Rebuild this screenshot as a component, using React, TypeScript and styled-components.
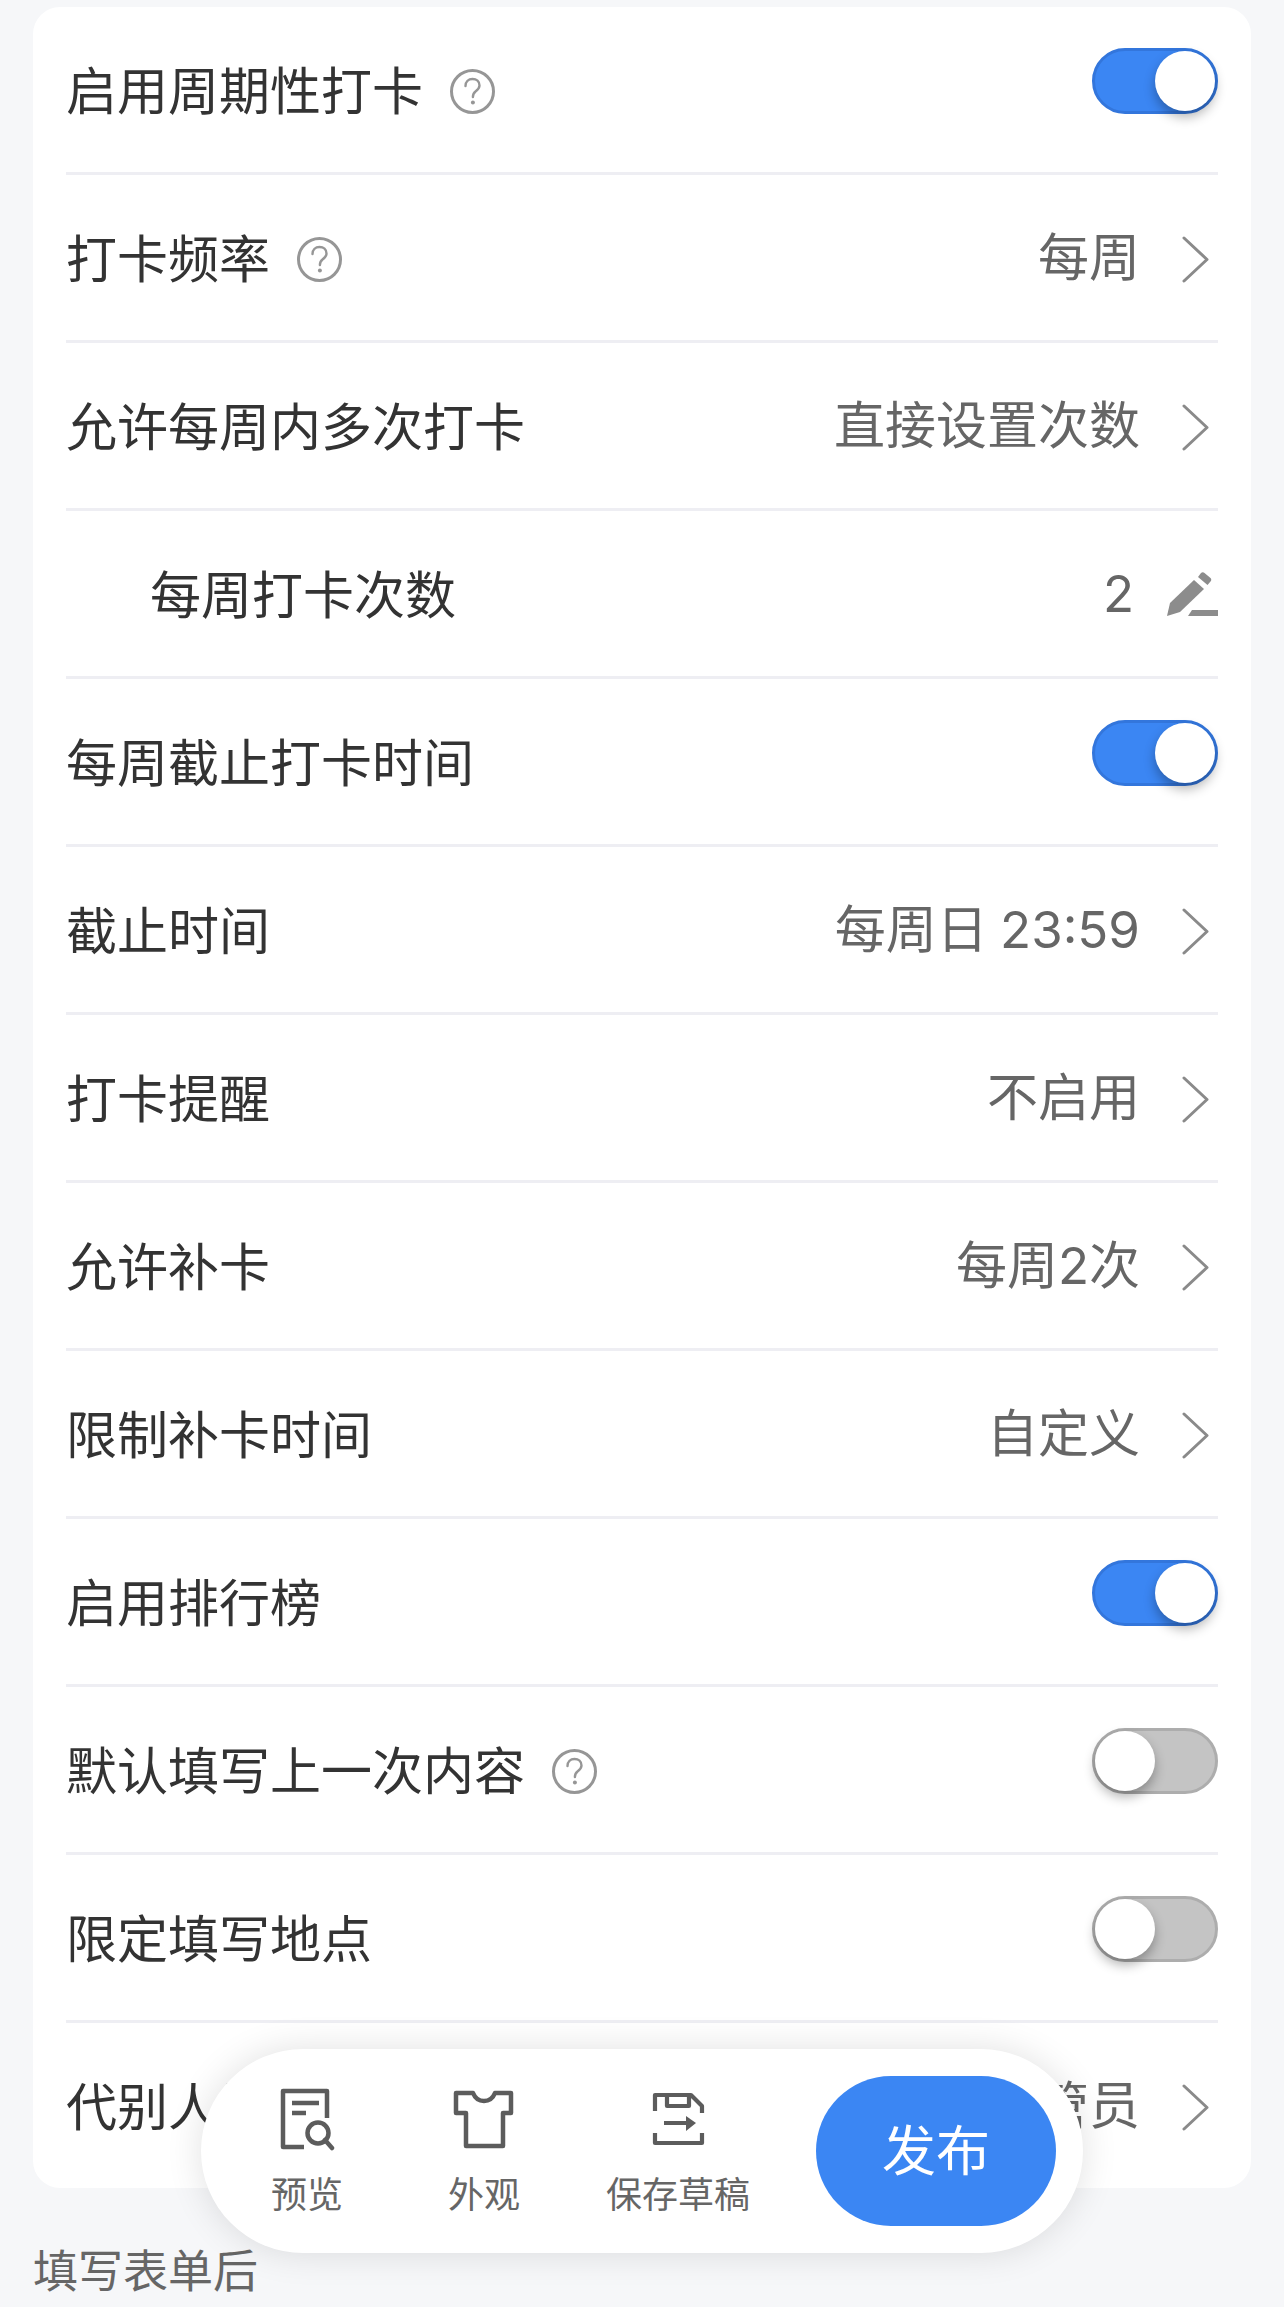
import React from "react";
import styled, { createGlobalStyle } from "styled-components";

const Global = createGlobalStyle`
  html, body { margin: 0; padding: 0; background: #f6f7f9; }
  body { font-family: "Noto Sans CJK SC", "Liberation Sans", sans-serif; }
`;

const Page = styled.div`
  position: relative;
  width: 1284px;
  height: 2307px;
  overflow: hidden;
  background: #f6f7f9;
  padding-top: 7px;
  box-sizing: border-box;
`;

const Card = styled.div`
  margin: 0 33px;
  padding: 0 33px;
  background: #fff;
  border-radius: 27px;
`;

const Row = styled.div`
  display: flex;
  align-items: center;
  height: 165px;
  border-bottom: 3px solid #eeeef3;
  &:last-child { border-bottom: none; }
`;

const Label = styled.div<{ $indent?: boolean }>`
  font-size: 51px;
  line-height: 60px;
  padding-bottom: 4px;
  color: #333;
  white-space: nowrap;
  padding-left: ${(p) => (p.$indent ? "84px" : "0")};
`;

const Right = styled.div`
  margin-left: auto;
  display: flex;
  align-items: center;
`;

const Value = styled.div`
  font-family: "Inter", "Noto Sans CJK SC", sans-serif;
  font-size: 51px;
  line-height: 60px;
  word-spacing: -2px;
  color: #666;
  white-space: nowrap;
`;

const Help = styled.svg`
  width: 45px;
  height: 45px;
  margin: 3px 0 0 27px;
  flex: none;
`;

const Chevron = styled.svg`
  width: 27px;
  height: 47px;
  margin: 3px 9px 0 42px;
  flex: none;
`;

const Pencil = styled.svg`
  width: 51px;
  height: 44px;
  margin-left: 33px;
  flex: none;
`;

const Track = styled.div<{ $on: boolean }>`
  position: relative;
  margin-left: auto;
  align-self: flex-start;
  margin-top: 41px;
  width: 126px;
  height: 66px;
  box-sizing: border-box;
  border-radius: 33px;
  background: ${(p) => (p.$on ? "#3b86f3" : "#c4c4c4")};
  border: 3px solid ${(p) => (p.$on ? "#3376dc" : "#adadad")};
`;

const Knob = styled.div<{ $on: boolean }>`
  position: absolute;
  top: 0;
  ${(p) => (p.$on ? "right: 0;" : "left: 0;")}
  width: 60px;
  height: 60px;
  border-radius: 50%;
  background: #fff;
  box-shadow: 0 6px 12px rgba(0, 0, 0, 0.3);
`;

const SectionTitle = styled.div`
  margin: 51px 0 0 33px;
  font-size: 45px;
  line-height: 60px;
  color: #666;
`;

const Bar = styled.div`
  position: absolute;
  left: 201px;
  bottom: 54px;
  width: 882px;
  height: 204px;
  box-sizing: border-box;
  padding: 27px;
  display: flex;
  align-items: center;
  background: #fff;
  border-radius: 102px;
  box-shadow: 0 0 36px rgba(0, 0, 0, 0.12);
`;

const Tool = styled.div<{ $center: number }>`
  position: absolute;
  top: 36px;
  left: ${(p) => p.$center}px;
  transform: translateX(-50%);
  display: flex;
  flex-direction: column;
  align-items: center;
`;

const ToolIcon = styled.svg`
  width: 66px;
  height: 66px;
  display: block;
`;

const ToolLabel = styled.div`
  margin-top: 17px;
  font-size: 36px;
  line-height: 48px;
  color: #666;
  white-space: nowrap;
`;

const Publish = styled.div`
  margin-left: auto;
  width: 240px;
  height: 150px;
  box-sizing: border-box;
  padding-bottom: 8px;
  border-radius: 75px;
  background: #3b86f3;
  color: #fff;
  font-size: 54px;
  display: flex;
  align-items: center;
  justify-content: center;
`;

const HelpIcon = () => (
  <Help viewBox="0 0 45 45" fill="none" stroke="#969696" strokeWidth="3">
    <circle cx="22.5" cy="22.5" r="21" />
    <path d="M15.500 17c0-4.500 3-7 7-7s7 2.500 7 6.500c0 3-2 4.500-4 6-1.900 1.500-2.600 2.700-2.600 5.500" strokeWidth="2.400" strokeLinecap="round" />
    <circle cx="22.900" cy="33.500" r="2" fill="#969696" stroke="none" />
  </Help>
);

const ChevronIcon = () => (
  <Chevron viewBox="0 0 27 47" fill="none" stroke="#8a8a8a" strokeWidth="3" strokeLinecap="round" strokeLinejoin="round">
    <path d="M2 2l23 21.500L2 45" />
  </Chevron>
);

const PencilIcon = () => (
  <Pencil viewBox="0 0 51 44" fill="#8c8c8c">
    <path d="M0 44l3-13L27 8l10 9-24 23z" />
    <path d="M31 5l3-4c1-1 2.500-1 3.500 0l6 5c1 1 1 2.500 0 3.500l-3 3.500z" />
    <path d="M21 44l4-6h26v6z" />
  </Pencil>
);

type Item =
  | { label: string; help?: boolean; indent?: boolean; toggle: boolean }
  | { label: string; help?: boolean; indent?: boolean; value: string; edit?: boolean };

const items: Item[] = [
  { label: "启用周期性打卡", help: true, toggle: true },
  { label: "打卡频率", help: true, value: "每周" },
  { label: "允许每周内多次打卡", value: "直接设置次数" },
  { label: "每周打卡次数", indent: true, value: "2", edit: true },
  { label: "每周截止打卡时间", toggle: true },
  { label: "截止时间", value: "每周日 23:59" },
  { label: "打卡提醒", value: "不启用" },
  { label: "允许补卡", value: "每周2次" },
  { label: "限制补卡时间", value: "自定义" },
  { label: "启用排行榜", toggle: true },
  { label: "默认填写上一次内容", help: true, toggle: false },
  { label: "限定填写地点", toggle: false },
  { label: "代别人填写", value: "仅管员" },
];

export default function App() {
  return (
    <Page>
      <Global />
      <Card>
        {items.map((it) => (
          <Row key={it.label}>
            <Label $indent={it.indent}>{it.label}</Label>
            {it.help && <HelpIcon />}
            {"toggle" in it ? (
              <Track $on={it.toggle}>
                <Knob $on={it.toggle} />
              </Track>
            ) : (
              <Right>
                <Value>{it.value}</Value>
                {it.edit ? <PencilIcon /> : <ChevronIcon />}
              </Right>
            )}
          </Row>
        ))}
      </Card>
      <SectionTitle>填写表单后</SectionTitle>
      <Bar>
        <Tool $center={106}>
          <ToolIcon viewBox="0 0 66 66" fill="none" stroke="#5c5c5c" strokeWidth="4.500" strokeLinejoin="round">
            <path d="M30 62H9V6H53V33M18 18H45M18 28H32" />
            <circle cx="44" cy="48" r="10.500" />
            <path d="M51 55L58 63" strokeLinecap="round" />
          </ToolIcon>
          <ToolLabel>预览</ToolLabel>
        </Tool>
        <Tool $center={283}>
          <ToolIcon viewBox="0 0 66 66" fill="none" stroke="#5c5c5c" strokeWidth="4.500" strokeLinejoin="round">
            <path d="M22 8C24 13 28 16 33 16S42 13 44 8H60V28H52V61H15V28H5V8Z" />
          </ToolIcon>
          <ToolLabel>外观</ToolLabel>
        </Tool>
        <Tool $center={477}>
          <ToolIcon viewBox="0 0 66 66" fill="none" stroke="#5c5c5c" strokeWidth="4.200" strokeLinejoin="round">
            <path d="M10 26V10H46L57 21V28M10 48V58H57V48M22 10V21H44V12M19 38H42" />
            <path d="M41 31L51 38L41 46Z" fill="#5c5c5c" stroke="none" />
          </ToolIcon>
          <ToolLabel>保存草稿</ToolLabel>
        </Tool>
        <Publish>发布</Publish>
      </Bar>
    </Page>
  );
}
